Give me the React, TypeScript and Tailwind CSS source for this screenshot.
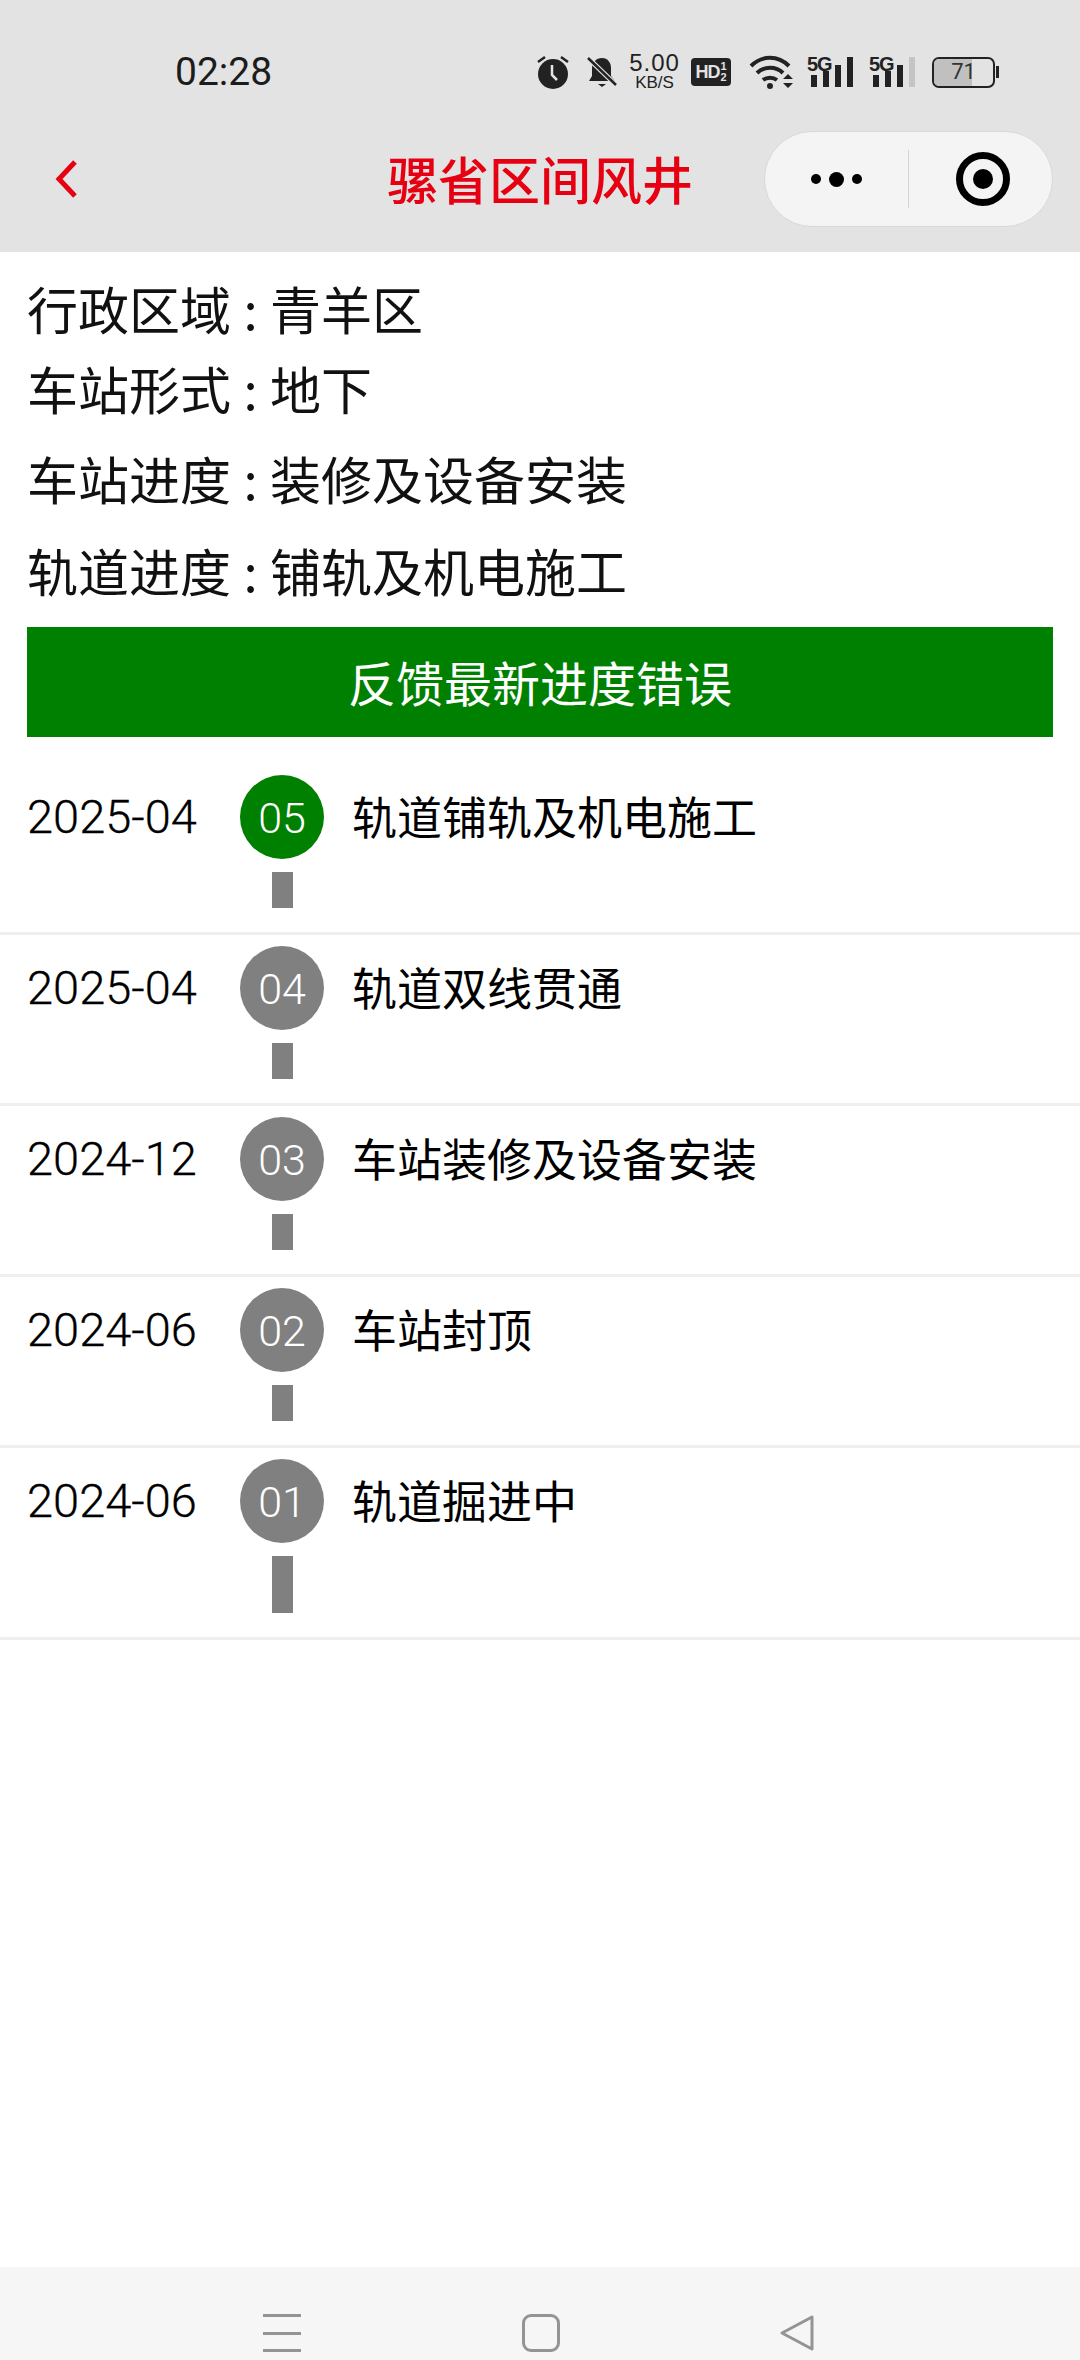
const cjk = 'font-["Noto_Sans_CJK_SC","Noto_Sans",sans-serif]';

const stages = [
  { date: '2025-04', no: '05', label: '轨道铺轨及机电施工', current: true },
  { date: '2025-04', no: '04', label: '轨道双线贯通' },
  { date: '2024-12', no: '03', label: '车站装修及设备安装' },
  { date: '2024-06', no: '02', label: '车站封顶' },
  { date: '2024-06', no: '01', label: '轨道掘进中', last: true },
];

function Signal({ dim }: { dim?: boolean }) {
  return (
    <div className="relative h-[33px] w-[47px]">
      <span className="absolute left-0 top-[-1px] font-['Liberation_Sans',sans-serif] text-[20px] font-bold leading-[18px] tracking-[-1px] text-[#222]">
        5G
      </span>
      <svg viewBox="0 0 47 33" className="absolute inset-0 h-full w-full">
        <rect x="4" y="19" width="6" height="12" fill="#222" />
        <rect x="16" y="15" width="6" height="16" fill="#222" />
        <rect x="28" y="9" width="6" height="22" fill="#222" />
        <rect x="40" y="1" width="6" height="30" fill={dim ? '#c4c4c4' : '#222'} />
      </svg>
    </div>
  );
}

function StatusBar() {
  return (
    <div className="flex h-[96px] items-end">
      <div className="flex h-[48px] w-full items-center pl-[175px]">
        <span className="w-[362px] font-['Roboto',sans-serif] text-[39px] leading-none text-[#1c1c1c]">02:28</span>
        <div className="flex items-center">
          <svg viewBox="0 0 32 34" className="h-[34px] w-[32px]">
            <path d="M1 7l7-5M31 7l-7-5" stroke="#222" strokeWidth="2.5" fill="none" />
            <circle cx="16" cy="19" r="15" fill="#222" />
            <path d="M15 10v10l5 5" stroke="#e3e3e3" strokeWidth="2.5" fill="none" />
          </svg>
          <svg viewBox="0 0 32 34" className="ml-[17px] h-[34px] w-[32px]">
            <path d="M16 3c6 0 9 5 9 10v8l4 5H3l3-5v-8c0-5 4-10 10-10z" fill="#222" />
            <path d="M12 29h8l-4 3z" fill="#222" />
            <path d="M2 3l28 27" stroke="#e3e3e3" strokeWidth="5" />
            <path d="M2 3l28 27" stroke="#222" strokeWidth="2.5" />
          </svg>
          <div className="ml-[11px] flex w-[51px] flex-col items-center font-['Liberation_Sans',sans-serif] text-[#222]">
            <span className="text-[24px] leading-[22px] tracking-[1px]">5.00</span>
            <span className="text-[17px] leading-[18px]">KB/S</span>
          </div>
          <div className="ml-[11px] flex h-[28px] w-[40px] items-center justify-center rounded-[4px] bg-[#222] font-['Liberation_Sans',sans-serif] text-[#e3e3e3]">
            <span className="text-[18px] font-bold leading-none tracking-[-1px]">HD</span>
            <span className="ml-[1px] flex flex-col text-[11px] font-bold leading-[11px]">
              <span>1</span>
              <span>2</span>
            </span>
          </div>
          <svg viewBox="0 0 44 34" className="ml-[18px] h-[34px] w-[44px]">
            <path d="M2 11c11-11 27-11 38 0" stroke="#222" strokeWidth="4" fill="none" />
            <path d="M8 18c7-7 19-7 26 0" stroke="#222" strokeWidth="4" fill="none" />
            <path d="M14 25c4-3 10-3 14 0" stroke="#222" strokeWidth="4" fill="none" />
            <circle cx="21" cy="31" r="3" fill="#222" />
            <path d="M34 24l5-5 5 5zM34 28l5 5 5-5z" fill="#222" />
          </svg>
          <div className="ml-[14px]">
            <Signal />
          </div>
          <div className="ml-[15px]">
            <Signal dim />
          </div>
          <div className="ml-[16px] flex items-center">
            <div className="relative h-[31px] w-[63px] overflow-hidden rounded-[7px] border-[2.5px] border-[#222]">
              <div className="h-full w-[38px] bg-[#c0c0c0]" />
              <span className="absolute inset-0 flex items-center justify-center font-['Roboto',sans-serif] text-[22px] leading-none text-[#333]">
                71
              </span>
            </div>
            <div className="ml-[1px] h-[12px] w-[3px] bg-[#222]" />
          </div>
        </div>
      </div>
    </div>
  );
}

function NavBar() {
  return (
    <div className="relative flex h-[156px] items-start justify-between pl-[54px] pr-[27px] pt-[35px]">
      <svg viewBox="0 0 24 38" className="mt-[29px] h-[38px] w-[24px]">
        <path d="M21 2L5 19l16 17" stroke="#e60012" strokeWidth="5" fill="none" />
      </svg>
      <span className={`${cjk} absolute left-0 right-0 top-[48px] text-center text-[51px] font-medium leading-[68px] text-[#e60012]`}>
        骡省区间风井
      </span>
      <div className="relative flex h-[96px] w-[289px] items-center rounded-full border border-[#d8d8d8] bg-[#f4f4f4]">
        <div className="flex w-[143px] items-center justify-center gap-[8px]">
          <span className="h-[10px] w-[10px] rounded-full bg-black" />
          <span className="h-[15px] w-[15px] rounded-full bg-black" />
          <span className="h-[10px] w-[10px] rounded-full bg-black" />
        </div>
        <div className="h-[58px] w-px bg-[#d4d4d4]" />
        <div className="flex flex-1 items-center justify-center pl-[4px]">
          <div className="flex h-[54px] w-[54px] items-center justify-center rounded-full border-[7px] border-black">
            <span className="h-[20px] w-[20px] rounded-full bg-black" />
          </div>
        </div>
      </div>
    </div>
  );
}

function Stage({ date, no, label, current, last }: { date: string; no: string; label: string; current?: boolean; last?: boolean }) {
  return (
    <div className="border-b-[3px] border-[#efefef] px-[27px] first:pt-[38px] [&:not(:first-child)]:pt-[11px]">
      <div className="flex items-start">
        <div className="flex h-[84px] w-[213px] items-center font-['Roboto',sans-serif] text-[47px] font-light text-black [-webkit-text-stroke:0.3px_black]">
          {date}
        </div>
        <div className="flex w-[84px] flex-col items-center">
          <div
            className={`flex h-[84px] w-[84px] items-center justify-center rounded-full pt-[2px] font-['Roboto',sans-serif] text-[43px] font-light text-white ${
              current ? 'bg-[#008000]' : 'bg-[#808080]'
            }`}
          >
            {no}
          </div>
          <div className={`mb-[24px] mt-[13px] w-[21px] bg-[#808080] ${last ? 'h-[57px]' : 'h-[36px]'}`} />
        </div>
        <div className={`${cjk} ml-[28px] flex h-[84px] items-center pb-[2px] text-[45px] text-black`}>{label}</div>
      </div>
    </div>
  );
}

export default function App() {
  return (
    <div className={`${cjk} flex h-[2360px] w-[1080px] flex-col overflow-hidden bg-white`}>
      <div className="bg-[#e3e3e3]">
        <StatusBar />
        <NavBar />
      </div>
      <div className="px-[27px] pt-[16px] text-[51px] text-[#111] [word-spacing:1px]">
        <div className="h-[80px] leading-[80px]">行政区域 : 青羊区</div>
        <div className="h-[80px] leading-[80px]">车站形式 : 地下</div>
        <div className="mt-[10px] h-[80px] leading-[80px]">车站进度 : 装修及设备安装</div>
        <div className="mt-[12px] h-[80px] leading-[80px]">轨道进度 : 铺轨及机电施工</div>
      </div>
      <div className="mx-[27px] mt-[17px] flex h-[110px] items-center justify-center bg-[#008000] pb-[2px] text-[48px] text-white">
        反馈最新进度错误
      </div>
      <div>
        {stages.map((s) => (
          <Stage key={s.no} {...s} />
        ))}
      </div>
      <div className="mt-auto flex h-[93px] items-start bg-[#f6f6f6] pt-[47px]">
        <div className="ml-[263px] flex h-[38px] w-[38px] flex-col justify-between">
          <span className="h-[3px] bg-[#949494]" />
          <span className="h-[3px] bg-[#949494]" />
          <span className="h-[3px] bg-[#949494]" />
        </div>
        <div className="ml-[221px] h-[38px] w-[38px] rounded-[9px] border-[3px] border-[#949494]" />
        <svg viewBox="0 0 36 38" className="ml-[219px] h-[38px] w-[36px]">
          <path d="M33 3L3 19l30 16z" stroke="#949494" strokeWidth="3" strokeLinejoin="round" fill="none" />
        </svg>
      </div>
    </div>
  );
}
